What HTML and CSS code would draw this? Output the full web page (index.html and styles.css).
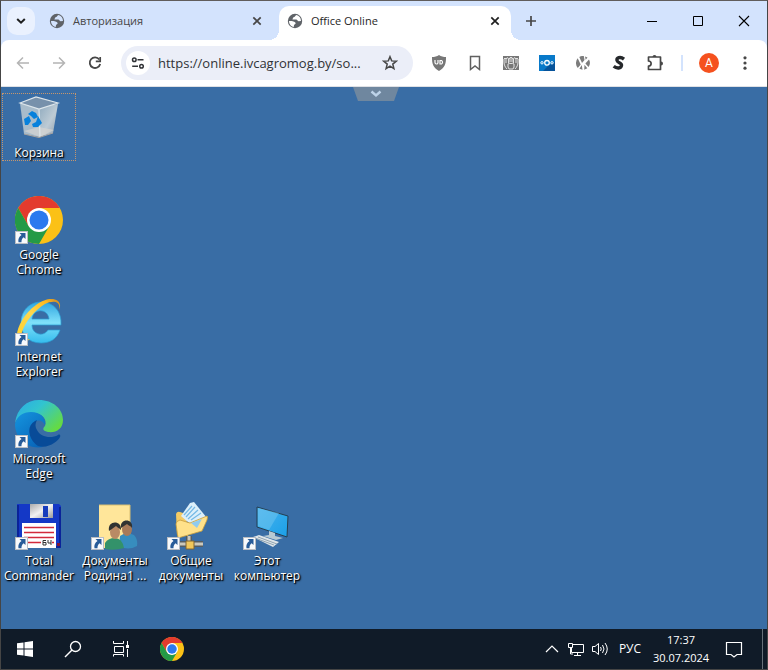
FILE: index.html
```html
<!DOCTYPE html>
<html lang="ru">
<head>
<meta charset="utf-8">
<meta name="viewport" content="width=device-width, initial-scale=1">
<title>Office Online</title>
<link rel="stylesheet" href="styles.css">
</head>
<body>
<svg class="defs" aria-hidden="true">
  <defs>
    <symbol id="globe" viewBox="0 0 16 16">
      <circle cx="8" cy="8" r="7.200" fill="#5f6368"/>
      <path d="M9.500 2C8 2.500 8.500 3.700 7 4.100C5.800 4.500 6 5.800 5.400 6.500H9.200C10.400 6.500 10.300 8 11.500 8.200L14 8C14 5 12 2.500 9.500 2ZM2 8C3 8 5 7.900 6.500 8.400C8.400 9 9.300 10 8.200 11.100C7.200 11.600 6.800 12 6.800 13.900C4 13.500 2 11 2 8Z" fill="currentColor"/>
    </symbol>
    <symbol id="close" viewBox="0 0 16 16">
      <path d="M4.300 4.300L11.700 11.700M11.700 4.300L4.300 11.700" fill="none" stroke="currentColor" stroke-width="1.700"/>
    </symbol>
    <symbol id="chrome" viewBox="0 0 48 48">
      <circle cx="24" cy="24" r="24" fill="#fbc116"/>
      <path d="M24 24L3.200 12A24 24 0 0 1 44.800 12L24 12Z" fill="#e33b2e"/>
      <path d="M3.200 12L13.600 30L24 24L24 12Z" fill="#e33b2e"/>
      <path d="M3.200 12A24 24 0 0 0 24 48L34.400 30L24 36L13.600 30Z" fill="#249a46"/>
      <circle cx="24" cy="24" r="12" fill="#fff"/>
      <circle cx="24" cy="24" r="9.500" fill="#2b79ee"/>
    </symbol>
    <symbol id="shortcut" viewBox="0 0 13 13">
      <path d="M0 0H13V13H0Z" fill="#b9bdc3"/>
      <path d="M1 1H12V12H1Z" fill="#f8fafc"/>
      <path d="M4.500 2H10.500V8L8.600 6.300C7 7.600 6.400 9 6.500 11.300H3.500C2.800 8 4.200 5.500 6.500 4Z" fill="#285c99"/>
    </symbol>
    <linearGradient id="ieBlue" x1="0" y1="0" x2="0" y2="1"><stop offset="0" stop-color="#2fa5e0"/><stop offset=".5" stop-color="#7fe0fa"/><stop offset="1" stop-color="#35bced"/></linearGradient>
    <linearGradient id="ieGold" x1="0" y1="1" x2="1" y2="0"><stop offset="0" stop-color="#ffcf2a"/><stop offset=".5" stop-color="#ffd84e"/><stop offset=".8" stop-color="#ffb91e"/><stop offset="1" stop-color="#c78526"/></linearGradient>
    <linearGradient id="edgeTop" x1="0" y1="0" x2="1" y2=".7"><stop offset="0" stop-color="#2aa9e7"/><stop offset=".45" stop-color="#32c4cf"/><stop offset="1" stop-color="#65db42"/></linearGradient>
    <linearGradient id="edgeLeft" x1="0" y1="0" x2=".7" y2="1"><stop offset="0" stop-color="#1595df"/><stop offset="1" stop-color="#0866ba"/></linearGradient>
    <linearGradient id="bin" x1="0" y1="0" x2="1" y2="1"><stop offset="0" stop-color="#8faabe"/><stop offset=".55" stop-color="#bdcbd5"/><stop offset="1" stop-color="#8d9ba9"/></linearGradient>
    <linearGradient id="screen" x1="0" y1="0" x2="1" y2="1"><stop offset="0" stop-color="#49b2ee"/><stop offset="1" stop-color="#1aa0e8"/></linearGradient>
    <linearGradient id="metal" x1="0" y1="0" x2="1" y2="1"><stop offset="0" stop-color="#aaa"/><stop offset=".5" stop-color="#f2f2f2"/><stop offset="1" stop-color="#999"/></linearGradient>
  </defs>
</svg>
<div class="window">
  <header class="tabstrip">
    <button class="tab-search" aria-label="Поиск вкладок"><svg width="12" height="12" viewBox="0 0 12 12"><path d="M2.200 4L6 7.700L9.800 4" fill="none" stroke="#1f1f1f" stroke-width="2"/></svg></button>
    <nav class="tabs">
      <div class="tab"><svg class="favicon"><use href="#globe"/></svg><a href="#">Авторизация</a><button aria-label="Закрыть вкладку"><svg width="16" height="16"><use href="#close"/></svg></button></div>
      <div class="tab active"><svg class="favicon"><use href="#globe"/></svg><a href="#">Office Online</a><button aria-label="Закрыть вкладку"><svg width="16" height="16"><use href="#close"/></svg></button></div>
    </nav>
    <button class="new-tab" aria-label="Новая вкладка"><svg width="12" height="12" viewBox="0 0 12 12"><path d="M6 1V11M1 6H11" stroke="#474747" stroke-width="1.700"/></svg></button>
    <div class="window-controls">
      <button aria-label="Свернуть"><svg width="12" height="12" viewBox="0 0 12 12"><path d="M1 6.500H11" stroke="#000"/></svg></button>
      <button aria-label="Развернуть"><svg width="12" height="12" viewBox="0 0 12 12"><path d="M1.500 1.500H10.500V10.500H1.500Z" fill="none" stroke="#000"/></svg></button>
      <button aria-label="Закрыть"><svg width="12" height="12" viewBox="0 0 12 12"><path d="M1 1L11 11M11 1L1 11" stroke="#000" stroke-width="1.100"/></svg></button>
    </div>
  </header>

  <div class="toolbar">
    <button aria-label="Назад"><svg width="14" height="14" viewBox="0 0 14 14"><path d="M13 7H2M7 1.500L1.500 7L7 12.500" fill="none" stroke="#b4b4b4" stroke-width="1.500"/></svg></button>
    <button aria-label="Вперёд"><svg width="14" height="14" viewBox="0 0 14 14"><path d="M1 7H12M7 1.500L12.500 7L7 12.500" fill="none" stroke="#b4b4b4" stroke-width="1.500"/></svg></button>
    <button aria-label="Обновить"><svg width="14" height="14" viewBox="0 0 14 14"><path d="M11.300 3.500A5.300 5.300 0 1 0 12.200 8" fill="none" stroke="#474747" stroke-width="1.800"/><path d="M12.200 1V5.300H7.800" fill="none" stroke="#474747" stroke-width="1.700"/></svg></button>
    <div class="address">
      <button class="site-info" aria-label="Сведения о сайте"><svg width="14" height="12" viewBox="0 0 14 12"><g fill="none" stroke="#303236" stroke-width="1.500"><circle cx="3.300" cy="2.800" r="1.800"/><circle cx="10.500" cy="9.200" r="1.800"/><path d="M6.500 2.800H12.500M1.200 9.200H7"/></g></svg></button>
      <input type="text" aria-label="Адрес" value="https://online.ivcagromog.by/so...">
      <button class="star" aria-label="В закладки"><svg width="16" height="16" viewBox="0 0 16 16"><path d="M8 1.700L9.700 5.900L14.300 6.200L10.800 9.100L11.900 13.600L8 11.200L4.100 13.600L5.200 9.100L1.700 6.200L6.300 5.900Z" fill="none" stroke="#474747" stroke-width="1.500"/></svg></button>
    </div>
    <button aria-label="uBlock"><svg width="16" height="16" viewBox="0 0 16 16"><path d="M8 0C10 1.500 12.500 2 15 2C15.200 9 13.500 13 8 16C2.500 13 .8 9 1 2C3.500 2 6 1.500 8 0Z" fill="#777"/><path d="M4 5V7.500A1.500 1.500 0 0 0 7 7.500V5M9 5V9H10.500A2 2 0 0 0 10.500 5.500H9" fill="none" stroke="#fff" stroke-width="1.200"/></svg></button>
    <button aria-label="Закладки"><svg width="12" height="16" viewBox="0 0 12 16"><path d="M1.500 1.500H10.500V14.500L6 11L1.500 14.500Z" fill="none" stroke="#606060" stroke-width="1.500"/></svg></button>
    <button aria-label="Расширение"><svg width="16" height="16" viewBox="0 0 16 16"><path d="M0 1H16V15H0Z" fill="#777"/><path d="M4 14C2 12 1 10 1 7V4Q2 2 3 4V8M12 14C14 12 15 10 15 7V4Q14 2 13 4V8M3 4Q4.500 1 5.500 4V8M13 4Q11.500 1 10.500 4V8M5.500 4L7 3V7M10.500 4L9 3V7M7 3Q8 1 9 3" fill="none" stroke="#eee" stroke-width=".9"/><path d="M5 9L7 8L8 9L9 8L11 9V12L10 14H6L5 12Z" fill="none" stroke="#eee" stroke-width=".9"/></svg></button>
    <button aria-label="Nextcloud"><svg width="16" height="16" viewBox="0 0 16 16"><path d="M0 0H16V16H0Z" fill="#0879c9"/><path d="M14 9L16 6V16H4L10 10Z" fill="#07539a"/><g fill="none" stroke="#fff"><circle cx="8" cy="7.800" r="2.300" stroke-width="1.300"/><circle cx="3" cy="7.800" r="1.200" stroke-width="1"/><circle cx="13" cy="7.800" r="1.200" stroke-width="1"/></g></svg></button>
    <button aria-label="Фильтр"><svg width="14" height="14" viewBox="0 0 14 14"><g fill="#7c7c7c"><path d="M0 7A7 7 0 0 1 1.700 2.200L4.700 8.500L1.800 12A7 7 0 0 1 0 7Z"/><path d="M3.300 1A7 7 0 0 1 7.800 0L8.500 4L6 7Z"/><path d="M9 .5L11.500 1.600L9.700 3.800ZM13 3.500A7 7 0 0 1 12.500 11L9.400 7.500ZM5.800 9L6.500 13.800L3.400 12.700ZM8.500 8.800L11.300 12.300L8.200 13.700Z"/></g></svg></button>
    <button aria-label="Стили"><svg width="14" height="16" viewBox="0 0 14 16"><path d="M12 4.200C8 1 4.500 3 5 5.500C5.500 8 10 7.500 9.500 10.500C9 13.500 5 14 1.700 11.300" fill="none" stroke="#25282b" stroke-width="3.400"/></svg></button>
    <button aria-label="Расширения"><svg width="18" height="18" viewBox="0 0 18 18"><path d="M2.500 3H14.500V15.500H2.500V12C6 12 6 7 2.500 7Z" fill="none" stroke="#474747" stroke-width="1.700" stroke-linejoin="round"/><path d="M6.500 3A2 2 0 0 1 10.500 3M15 7.500A2 2 0 0 1 15 11.500" fill="#474747"/></svg></button>
    <span class="divider"></span>
    <button aria-label="Профиль"><span class="avatar">А</span></button>
    <button aria-label="Меню"><svg width="4" height="16" viewBox="0 0 4 16"><g fill="#474747"><circle cx="2" cy="2.800" r="1.600"/><circle cx="2" cy="8" r="1.600"/><circle cx="2" cy="13.200" r="1.600"/></g></svg></button>
  </div>

  <main class="desktop">
    <button class="pull-handle" aria-label="Показать панель"><svg width="12" height="8" viewBox="0 0 12 8"><path d="M1.500 1.500L6 5.500L10.500 1.500" fill="none" stroke="#bdd3e9" stroke-width="2.400"/></svg></button>
    <a href="#" class="item first-column selected">
      <svg class="picture" viewBox="0 0 48 48">
        <path d="M5 9L24 13V43L9 40Z" fill="#a8bccb"/><path d="M24 13L43 10L38 39L24 43Z" fill="url(#bin)"/><path d="M5 9L21 3L43 9L24 15Z" fill="#7791ab"/><path d="M9 37L24 33L39 36L25 43Z" fill="#d5d4d2" opacity=".7"/><path d="M5 9L21 3L43 9L24 15ZM24 15L25 43" fill="none" stroke="#dde6eb" stroke-width="1.200"/><path d="M9 40L24 43.500L38 39" fill="none" stroke="#a9a4a0"/>
        <g fill="#0781dc"><path d="M13 20L17 17L21 19L23 23L19 25L16 22Z"/><path d="M9 25L14 22L16 27L13 31L10 31Z"/><path d="M23 22L27 29L23 33L18 33L17 30L21 28Z"/></g>
      </svg><span>Корзина</span></a>
    <a href="#" class="item first-column"><svg class="picture" viewBox="0 0 48 48"><use href="#chrome"/><use href="#shortcut" x="0" y="35" width="13" height="13"/></svg><span>Google Chrome</span></a>
    <a href="#" class="item first-column"><svg class="picture" viewBox="0 0 48 48">
        <path fill-rule="evenodd" d="M46 27H17C17 37 29 39 33 32H45C42 41 35 45 26 45C13 45 6 36 6 25C6 12 15 4 26 4C39 4 47 14 46 27ZM17 21H34C33 10 18 10 17 21Z" fill="url(#ieBlue)" stroke="#2b9fd4" stroke-width=".7"/>
        <path d="M44 12C49 2 36 -4 21 7C7 17 -1 35 3 42C6 46 12 44 15 41C9 42 5 40 7 34C10 24 20 12 30 6C38 2 46 3 44 12Z" fill="url(#ieGold)"/>
        <use href="#shortcut" x="0" y="35" width="13" height="13"/></svg><span>Internet Explorer</span></a>
    <a href="#" class="item first-column"><svg class="picture" viewBox="0 0 48 48">
        <path d="M0 23C2 8 12 0 24 0C38 0 48 9 48 20C48 29 41 33 33 32C28 31 27 29 30 26C33 19 26 12 16 13C8 13 3 17 0 23Z" fill="url(#edgeTop)"/>
        <path d="M0 24C2 16 8 12 16 12C26 12 31 18 30 25C28 21 24 19 20 22C10 29 20 43 28 47C13 50 0 39 0 24Z" fill="url(#edgeLeft)"/>
        <path d="M20 21C11 26 13 39 23 46C34 49 43 41 45 37C46 35 44 34 43 35C36 39 25 37 22 30C20 27 20 24 22 20Z" fill="#084b98"/>
        <use href="#shortcut" x="0" y="35" width="13" height="13"/></svg><span>Microsoft Edge</span></a>
    <a href="#" class="item first-column"><svg class="picture" viewBox="0 0 48 48">
        <path d="M2 2H44L46 4V46H2Z" fill="#1438c6"/><path d="M3 3V45M2 45H45V5" fill="none" stroke="#071d8a" stroke-width="1.500"/><path d="M15 2H38V16H15Z" fill="url(#metal)"/><path d="M28 4H33V15H28Z" fill="#183dbd"/><path d="M7 21H41V46H7Z" fill="#fff"/><path d="M9 25.500H39M9 30.500H39M9 35.500H39M13 40.500H26M37 40.500H39" stroke="#d22a3b" stroke-width="1.300"/><path d="M42 41H45V44H42Z" fill="#7e1738"/><path d="M31 38.500H28V43H31V40.500H28M33 38V41H36M36 38V43" fill="none" stroke="#333"/>
        <use href="#shortcut" x="0" y="35" width="13" height="13"/></svg><span>Total Commander</span></a>
    <a href="#" class="item"><svg class="picture" viewBox="0 0 48 48">
        <path d="M8 3H39V46H8Z" fill="#ffe69a"/><path d="M8 3H39V45" fill="none" stroke="#d9bf70"/>
        <path d="M29 34Q35 29 43 33Q47 37 46 44Q37 49 28 44Z" fill="#378dbe"/><ellipse cx="36" cy="27" rx="5" ry="7" fill="#a77a59"/><path d="M30 26C28 16 43 16 41 26C40 24 38 24 36 22Q33 24 30 26Z" fill="#303332"/>
        <path d="M14 47V41Q17 36 24 36Q31 36 33 46Q24 49 14 47Z" fill="#33926a"/><ellipse cx="24" cy="30" rx="5" ry="7" fill="#b98a65"/><path d="M18 29C16 18 31 18 30 28C28 26 27 26 25 24Q21 27 18 29Z" fill="#303332"/>
        <use href="#shortcut" x="0" y="35" width="13" height="13"/></svg><span>Документы Родина1 ...</span></a>
    <a href="#" class="item"><svg class="picture" viewBox="0 0 48 48">
        <path d="M9 12Q10 9 13 10L19 12L21 34L10 33Z" fill="#f4cb65"/><path d="M14 14L23 1L27 0L40 16L30 28Z" fill="#dceffa"/><path d="M17 13L25 4M19 15L28 5M21 17L31 8M24 18L34 11" stroke="#74b9e5" stroke-width="1.200"/><path d="M9 22Q9 19 13 18L23 21L40 14Q41 14 40 18L35 29L11 36Z" fill="#ffe18a" stroke="#c69d3e" stroke-width=".8"/><path d="M24 21L35 17L30 26Z" fill="#90cbef"/>
        <path d="M22 34V40M13 42H36" stroke="#555d62" stroke-width="6"/><path d="M22 34V40M13 42H36" stroke="#cbc8bb" stroke-width="3"/><path d="M19 39H27V47H19Z" fill="#f1c75a" stroke="#7f6532"/>
        <use href="#shortcut" x="0" y="35" width="13" height="13"/></svg><span>Общие документы</span></a>
    <a href="#" class="item"><svg class="picture" viewBox="0 0 48 48">
        <path d="M14 5L45 14L44 35L14 25Z" fill="url(#screen)" stroke="#253e50"/><path d="M15 6L36 11L26 28L15 24Z" fill="#79c9f0" opacity=".45"/><path d="M26 29L32 31V34L40 36L33 38L20 34L26 33Z" fill="#b9cad3"/><path d="M10 35L16 33L36 40L30 45Z" fill="#dfe5e9"/><path d="M12 36L31 43M15 35L34 42" stroke="#8fa3b1"/>
        <use href="#shortcut" x="0" y="35" width="13" height="13"/></svg><span>Этот компьютер</span></a>
  </main>

  <footer class="taskbar">
    <button aria-label="Пуск"><svg width="16" height="16" viewBox="0 0 16 16"><path d="M0 2.300L6.500 1.400V7.500H0ZM7.500 1.200L16 0V7.500H7.500ZM0 8.500H6.500V14.600L0 13.700ZM7.500 8.500H16V16L7.500 14.800Z" fill="#fff"/></svg></button>
    <button aria-label="Поиск"><svg width="18" height="18" viewBox="0 0 18 18"><circle cx="11.500" cy="6.500" r="5" fill="none" stroke="#fff" stroke-width="1.300"/><path d="M8 10L1 17" stroke="#fff" stroke-width="1.500"/></svg></button>
    <button aria-label="Представление задач"><svg width="18" height="18" viewBox="0 0 18 18"><path d="M1.500 1V3.500H11.500V1M2.500 6.500H11.500V12.500H2.500ZM1.500 16.500V14.500H11.500V16.500M15.500 1V5M15.500 9V17" fill="none" stroke="#fff"/><path d="M14 5H17V8H14Z" fill="#fff"/></svg></button>
    <button class="running" aria-label="Google Chrome"><svg width="24" height="24"><use href="#chrome"/></svg></button>
    <div class="tray">
      <button aria-label="Скрытые значки"><svg width="14" height="8" viewBox="0 0 14 8"><path d="M1 7L7 1L13 7" fill="none" stroke="#fff" stroke-width="1.200"/></svg></button>
      <button aria-label="Сеть"><svg width="18" height="16" viewBox="0 0 18 16"><path d="M6 3.500H16.500V11.500H4.500V7M10.500 11.500V14M7 14.500H14M1.500 2.500H5.500V6.500H1.500ZM3.500 6.500V13H6" fill="none" stroke="#fff"/></svg></button>
      <button aria-label="Громкость"><svg width="18" height="16" viewBox="0 0 18 16"><path d="M1.500 5.500H4L7.500 2.500V13.500L4 10.500H1.500Z" fill="none" stroke="#fff"/><path d="M9.500 6Q11 8 9.500 10M11.500 4Q14.500 8 11.500 12M14 2Q18.500 8 14 14" fill="none" stroke="#fff"/></svg></button>
      <button class="language">РУС</button>
      <button class="clock"><time>17:37</time><time>30.07.2024</time></button>
      <button class="notices" aria-label="Уведомления"><svg width="18" height="18" viewBox="0 0 18 18"><path d="M1.500 2.500H16.500V14.500H12L9 17L6 14.500H1.500Z" fill="none" stroke="#fff" stroke-width="1.200"/></svg></button>
      <button class="show-desktop" aria-label="Свернуть все окна"></button>
    </div>
  </footer>
</div>
</body>
</html>
```
FILE: styles.css
```css
* { box-sizing: border-box; }

body {
  margin: 0;
  font: 12px/16px "Open Sans", "Noto Sans", sans-serif;
  color: #1f1f1f;
}

button {
  display: flex;
  align-items: center;
  justify-content: center;
  padding: 0;
  border: 0;
  background: none;
  color: inherit;
  font: inherit;
}

a { color: inherit; text-decoration: none; }
svg { flex: none; }
.defs { position: absolute; width: 0; height: 0; }

.window {
  display: flex;
  flex-direction: column;
  min-height: 100vh;
  border: 1px solid #454545;
  border-top-color: #605d5c;
  background: #d3e3fd;
}

.tabstrip {
  display: flex;
  align-items: center;
  height: 39px;
  padding-left: 6px;
}

.tab-search {
  width: 28px;
  height: 28px;
  border-radius: 10px;
  background: #eaf1fe;
}

.tabs {
  display: flex;
  align-self: stretch;
  gap: 6px;
  margin: 5px 0 0 6px;
}

.tab {
  position: relative;
  display: flex;
  align-items: center;
  gap: 8px;
  width: 232px;
  padding: 0 8px 4px;
  color: #474747;
  font-size: 11px;
}

.tab a { flex: 1; }
.tab button { width: 16px; height: 16px; }
.favicon { width: 16px; height: 16px; color: #d3e3fd; }

.tab.active {
  border-radius: 10px 10px 0 0;
  background: #fff;
  color: #1f1f1f;
}

.tab.active .favicon { color: #fff; }

.tab.active::before,
.tab.active::after {
  content: "";
  position: absolute;
  bottom: 0;
  width: 10px;
  height: 10px;
}

.tab.active::before {
  right: 100%;
  background: radial-gradient(circle at 0 0, #d3e3fd 10px, #fff 10px);
}

.tab.active::after {
  left: 100%;
  background: radial-gradient(circle at 100% 0, #d3e3fd 10px, #fff 10px);
}

.new-tab { width: 28px; height: 28px; margin-left: 6px; }
.window-controls { display: flex; margin-left: auto; }
.window-controls button { width: 46px; height: 38px; }

.toolbar {
  display: flex;
  align-items: center;
  height: 47px;
  padding: 0 4px;
  border-bottom: 1px solid #dfe1e5;
  border-radius: 8px 8px 0 0;
  background: #fff;
}

.toolbar > button { flex: none; width: 36px; height: 34px; }

.address {
  display: flex;
  flex: 1;
  align-items: center;
  min-width: 0;
  height: 34px;
  margin: 0 8px;
  padding: 0 5px;
  border-radius: 17px;
  background: #ebeef8;
}

.site-info {
  flex: none;
  width: 24px;
  height: 24px;
  border-radius: 50%;
  background: #fff;
}

.address input {
  flex: 1;
  min-width: 0;
  padding: 0 0 0 8px;
  border: 0;
  outline: 0;
  background: none;
  color: #303236;
  font: 13px/20px "Open Sans", "Noto Sans", sans-serif;
}

.star { flex: none; width: 36px; height: 28px; }

.divider {
  width: 2px;
  height: 16px;
  margin: 0 8px;
  background: #d3e3fd;
}

.avatar {
  width: 20px;
  height: 20px;
  border-radius: 50%;
  background: #f5511e;
  color: #fff;
  font: 12px/20px Roboto, sans-serif;
}

.desktop {
  position: relative;
  flex: 1;
  display: grid;
  grid-template-columns: repeat(auto-fill, 76px);
  grid-auto-rows: 102px;
  align-content: start;
  padding-top: 6px;
  background: #396da5;
}

.pull-handle {
  position: absolute;
  top: 0;
  left: calc(50% - 31px);
  width: 46px;
  height: 14px;
  background: #6f879f;
  clip-path: polygon(0 0, 100% 0, 41px 100%, 5px 100%);
}

.item {
  display: flex;
  flex-direction: column;
  align-items: center;
  align-self: start;
  gap: 3px;
  margin: 0 1px;
  border: 1px dotted transparent;
  color: #fff;
  line-height: 15px;
  text-align: center;
  text-shadow: 1px 1px 2px #000, 1px 1px 1px #000;
}

.item.selected { border-color: #c6966d; }
.first-column { grid-column: 1; }
.picture { width: 48px; height: 48px; }

.taskbar {
  display: flex;
  height: 40px;
  background: #101b28;
  color: #fff;
}

.taskbar > button { width: 48px; }
.taskbar > .running { margin-left: 3px; }
.tray { display: flex; margin-left: auto; }
.tray button { width: 24px; }
.tray .language { width: 36px; }

.tray .clock {
  flex-direction: column;
  width: 66px;
  font-size: 11px;
  line-height: 18px;
}

.tray .notices { width: 40px; }

.tray .show-desktop {
  width: 5px;
  margin-left: 8px;
  border-left: 1px solid #667079;
}
```
